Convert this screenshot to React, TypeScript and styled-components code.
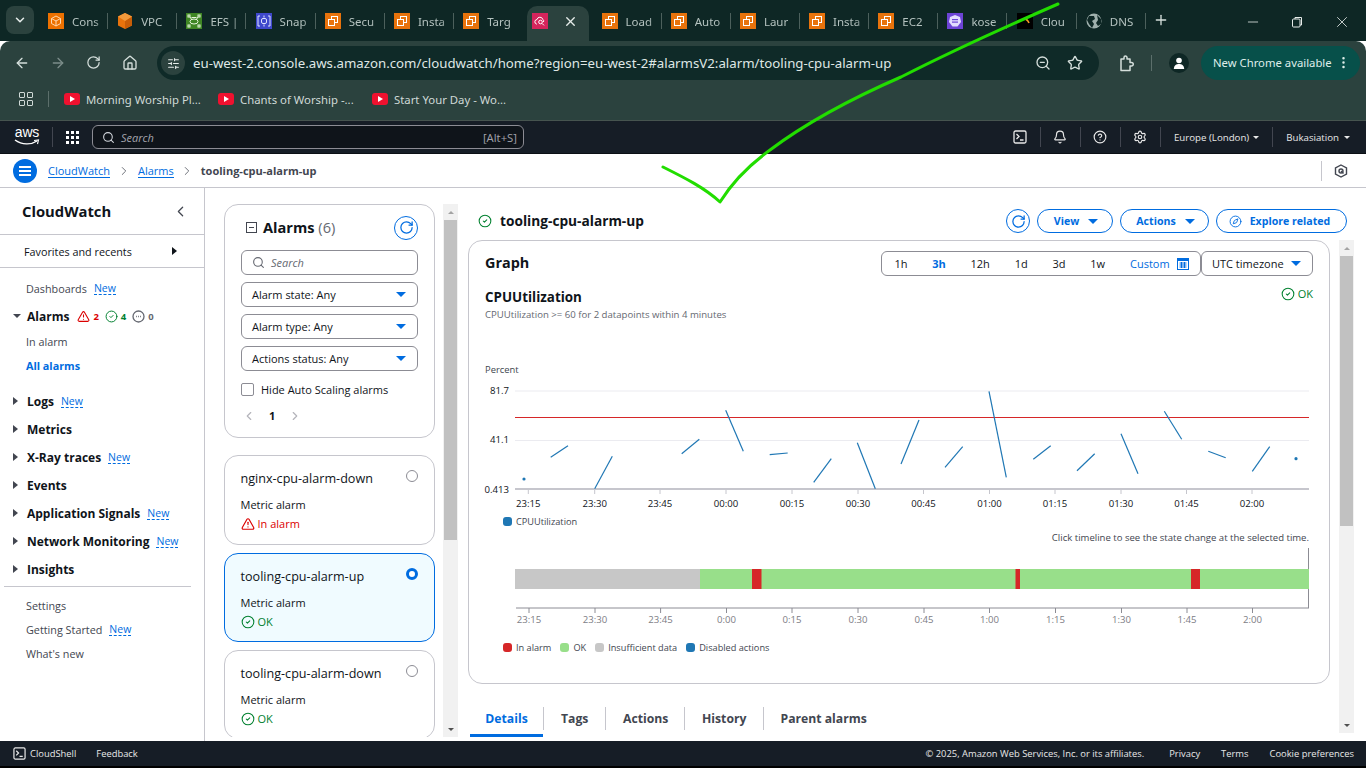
import styled, { createGlobalStyle } from 'styled-components';
import {
  ArrowLeft,
  ArrowRight,
  Bell,
  ChevronDown,
  ChevronLeft,
  ChevronRight,
  CircleCheck,
  CircleHelp,
  Compass,
  Home,
  Minus,
  MoreVertical,
  Plus,
  RotateCw,
  Search,
  Settings,
  SlidersHorizontal,
  Star,
  TriangleAlert,
  X,
  ZoomOut,
} from 'lucide-react';

const GlobalStyle = createGlobalStyle`
  html, body {
    margin: 0;
    padding: 0;
    background: #fff;
  }
  * {
    box-sizing: border-box;
  }
  body {
    font-family: "Open Sans", "Liberation Sans", sans-serif;
    color: #0f141a;
  }
`;

const blue = '#006ce0';
const green = '#00802f';
const red = '#db0000';

const Page = styled.div`
  position: relative;
  width: 1366px;
  height: 768px;
  overflow: hidden;
  display: flex;
  flex-direction: column;
`;

/* browser chrome */
const TabStrip = styled.div`
  height: 41px;
  flex: none;
  background: #0e2725;
  display: flex;
  align-items: flex-start;
  padding: 6px 0 0 6px;
  font-family: "Noto Sans", sans-serif;
`;

const TabMenu = styled.div`
  width: 28px;
  height: 28px;
  margin-right: 7px;
  border-radius: 8px;
  background: #2b423e;
  color: #e6ecea;
  display: flex;
  align-items: center;
  justify-content: center;
`;

const Tab = styled.div<{ $active?: boolean }>`
  width: ${(p) => (p.$active ? '62px' : '69.2px')};
  height: 35px;
  margin: ${(p) => (p.$active ? '0 5.6px 0 1.6px' : '0')};
  padding: 0 0 5px ${(p) => (p.$active ? '5.4px' : '7px')};
  display: flex;
  align-items: center;
  flex: none;
  background: ${(p) => (p.$active ? '#2b423e' : 'transparent')};
  border-radius: 10px 10px 0 0;
`;

const TabTitle = styled.span`
  width: 31px;
  margin: 0 4px 0 8px;
  overflow: hidden;
  white-space: nowrap;
  font-size: 11.5px;
  color: #b4c2bf;
  -webkit-mask-image: linear-gradient(to right, #000 72%, rgba(0, 0, 0, 0.35));
`;

const TabSep = styled.span`
  width: 1px;
  height: 16px;
  background: #4c605c;
`;

const TabClose = styled(X)`
  margin-left: 15px;
  color: #e6ecea;
`;

const FavBox = styled.span<{ $bg: string }>`
  width: 16px;
  height: 16px;
  flex: none;
  background: ${(p) => p.$bg};
  display: flex;
  align-items: center;
  justify-content: center;
`;

const NewTab = styled(Plus)`
  margin: 6px 0 0 5px;
  color: #d5dfdc;
`;

const WindowControls = styled.div`
  margin-left: auto;
  display: flex;
  align-items: center;
  gap: 30px;
  padding: 7px 15px 0 0;
  color: #e6ecea;
`;

const Toolbar = styled.div`
  height: 43px;
  flex: none;
  background: #2b423e;
  border-radius: 10px 10px 0 0;
  display: flex;
  align-items: center;
  padding: 1px 6px 0 14px;
  color: #d5dfdc;
  font-family: "Noto Sans", sans-serif;
`;

const ToolButton = styled.span<{ $dim?: boolean; $gap?: number; $left?: number }>`
  width: 16px;
  height: 16px;
  margin: 0 ${(p) => p.$gap ?? 20}px 0 ${(p) => p.$left ?? 0}px;
  display: flex;
  color: ${(p) => (p.$dim ? '#7c8d8a' : '#d5dfdc')};
`;

const UrlBar = styled.div`
  width: 942px;
  height: 34px;
  margin: 0 0 0 -1px;
  border-radius: 17px;
  background: #0f2a28;
  display: flex;
  align-items: center;
  padding: 0 16px 0 4px;
`;

const SiteInfo = styled.span`
  width: 24px;
  height: 24px;
  border-radius: 50%;
  background: #2b423e;
  display: flex;
  align-items: center;
  justify-content: center;
  color: #e6ecea;
`;

const UrlText = styled.span`
  margin-left: 8px;
  font-size: 13.25px;
  color: #dfe7e5;
  white-space: nowrap;
`;

const UrlIcons = styled.span`
  margin-left: auto;
  display: flex;
  gap: 16px;
  color: #d5dfdc;
`;

const ToolSep = styled.span`
  width: 1px;
  height: 16px;
  margin: 0 17px 0 17px;
  background: #5c6f6b;
`;

const ProfileDot = styled.span`
  width: 20px;
  height: 20px;
  margin-right: 12px;
  border-radius: 50%;
  background: #0e2725;
  color: #fff;
  display: flex;
  align-items: center;
  justify-content: center;
`;

const UpdatePill = styled.span`
  width: 159px;
  height: 34px;
  border-radius: 17px;
  background: #07504a;
  color: #dfeeea;
  font-size: 11.3px;
  display: flex;
  align-items: center;
  justify-content: space-between;
  padding: 0 9px 1px 12px;
  white-space: nowrap;
`;

const Bookmarks = styled.div`
  height: 37px;
  flex: none;
  background: #2b423e;
  border-bottom: 1px solid #46544f;
  display: flex;
  align-items: center;
  padding: 0 0 6px 19px;
  font-family: "Noto Sans", sans-serif;
  font-size: 11.35px;
  color: #cfd9d6;
`;

const AppsGrid = styled.span`
  width: 14px;
  height: 14px;
  display: grid;
  grid-template-columns: 6px 6px;
  gap: 2px;
  margin-right: 15px;
`;

const AppsCell = styled.span`
  border: 1.4px solid #cfd9d6;
  border-radius: 1px;
`;

const BookmarkSep = styled.span`
  width: 1px;
  height: 16px;
  margin-right: 15px;
  background: #5c6f6b;
`;

const Bookmark = styled.span<{ $w: number }>`
  width: ${(p) => p.$w}px;
  display: flex;
  align-items: center;
  gap: 6px;
  white-space: nowrap;
`;

const YouTubeMark = styled.span`
  width: 16px;
  height: 12px;
  border-radius: 3px;
  background: #f0112f;
  display: flex;
  align-items: center;
  justify-content: center;
  flex: none;
`;

/* console header */
const ConsoleNav = styled.div`
  height: 33px;
  flex: none;
  background: #161d26;
  display: flex;
  align-items: center;
  padding: 0 0 0 14px;
  color: #e8e8e8;
  border-bottom: 1px solid #0b0f14;
`;

const AwsLogo = styled.span`
  width: 26px;
  height: 24px;
  position: relative;
  display: block;
  color: #fff;
  font-family: "Liberation Sans", sans-serif;
  font-size: 14px;
  line-height: 15px;
  letter-spacing: -0.2px;
  text-align: center;
`;

const AwsSmile = styled.svg`
  position: absolute;
  left: 0;
  top: 14px;
`;

const NavSep = styled.span<{ $l: number; $r: number; $h?: number }>`
  width: 1px;
  height: ${(p) => p.$h ?? 20}px;
  margin: 0 ${(p) => p.$r}px 0 ${(p) => p.$l}px;
  background: #424650;
  flex: none;
`;

const Waffle = styled.span`
  width: 13px;
  height: 13px;
  display: grid;
  grid-template-columns: repeat(3, 3px);
  grid-auto-rows: 3px;
  gap: 2px;
`;

const WaffleDot = styled.span`
  background: #fff;
`;

const ConsoleSearch = styled.div`
  width: 432px;
  height: 24px;
  margin-left: 13px;
  border: 1px solid #8c8c94;
  border-radius: 6px;
  background: #0f141a;
  display: flex;
  align-items: center;
  padding: 0 6px 0 9px;
  gap: 6px;
  font-size: 11px;
  color: #a4a4ad;
`;

const SearchHint = styled.span`
  font-style: italic;
`;

const SearchKeys = styled.span`
  margin-left: auto;
  font-size: 11.3px;
`;

const NavRight = styled.div`
  margin-left: auto;
  display: flex;
  align-items: center;
  padding-right: 16px;
  font-size: 9.7px;
  color: #e8e8e8;
`;

const NavIconSlot = styled.span`
  width: 39px;
  display: flex;
  justify-content: center;
`;

const NavMenu = styled.span<{ $gap: number }>`
  display: flex;
  align-items: center;
  gap: ${(p) => p.$gap}px;
  white-space: nowrap;
`;

const Caret = styled.span<{ $dir?: 'down' | 'right' | 'up'; $size?: number; $color?: string }>`
  display: inline-block;
  flex: none;
  width: 0;
  height: 0;
  ${(p) => {
    const s = p.$size ?? 4;
    const c = p.$color ?? 'currentColor';
    if (p.$dir === 'right') {
      return `border-top: ${s}px solid transparent; border-bottom: ${s}px solid transparent; border-left: ${s * 1.25}px solid ${c};`;
    }
    if (p.$dir === 'up') {
      return `border-left: ${s * 1.2}px solid transparent; border-right: ${s * 1.2}px solid transparent; border-bottom: ${s * 1.2}px solid ${c};`;
    }
    return `border-left: ${s * 1.2}px solid transparent; border-right: ${s * 1.2}px solid transparent; border-top: ${s * 1.2}px solid ${c};`;
  }}
`;

const BreadcrumbBar = styled.div`
  height: 34px;
  flex: none;
  background: #fff;
  border-bottom: 1px solid #c6c6cd;
  display: flex;
  align-items: center;
  padding: 0 18px 0 13px;
  font-size: 11px;
`;

const MenuCircle = styled.span`
  width: 24px;
  height: 24px;
  margin-right: 11px;
  border-radius: 50%;
  background: ${blue};
  display: flex;
  flex-direction: column;
  align-items: center;
  justify-content: center;
  gap: 2px;
`;

const MenuLine = styled.span`
  width: 12px;
  height: 2px;
  background: #fff;
`;

const CrumbLink = styled.span`
  color: ${blue};
  border-bottom: 1px solid ${blue};
  line-height: 13px;
`;

const CrumbChevron = styled(ChevronRight)<{ $m: number }>`
  margin: 0 ${(p) => p.$m}px;
  color: #656871;
`;

const CrumbCurrent = styled.span`
  color: #424650;
  font-weight: 700;
  font-size: 11px;
`;

const CrumbEnd = styled.span`
  margin-left: auto;
  display: flex;
  align-items: center;
  gap: 12px;
  color: #424650;
`;

const CrumbEndSep = styled.span`
  width: 1px;
  height: 20px;
  background: #c6c6cd;
`;

/* body */
const Body = styled.div`
  flex: 1;
  min-height: 0;
  display: flex;
  background: #fff;
`;

const Sidebar = styled.nav`
  width: 205px;
  flex: none;
  border-right: 1px solid #c6c6cd;
  display: flex;
  flex-direction: column;
`;

const SideHead = styled.div`
  height: 47px;
  flex: none;
  border-bottom: 1px solid #c6c6cd;
  display: flex;
  align-items: center;
  justify-content: space-between;
  padding: 0 15px 0 22px;
  font-size: 14.8px;
  font-weight: 700;
`;

const SideFavs = styled.div`
  height: 33px;
  flex: none;
  border-bottom: 1px solid #c6c6cd;
  display: flex;
  align-items: center;
  justify-content: space-between;
  padding: 0 27px 0 24px;
  font-size: 10.8px;
  color: #0f141a;
`;

const SideItem = styled.div<{ $h: number; $top?: number }>`
  height: ${(p) => p.$h}px;
  margin-top: ${(p) => p.$top ?? 0}px;
  flex: none;
  display: flex;
  align-items: center;
  padding-left: 26px;
  font-size: 10.8px;
  color: #424650;
`;

const SideGroup = styled.div<{ $h?: number; $top?: number }>`
  height: ${(p) => p.$h ?? 28}px;
  margin-top: ${(p) => p.$top ?? 0}px;
  flex: none;
  display: flex;
  align-items: center;
  padding-left: 13px;
  font-size: 12px;
  font-weight: 700;
  color: #0f141a;
`;

const GroupCaret = styled.span`
  width: 14px;
  color: #424650;
  display: flex;
`;

const NewTag = styled.span`
  margin-left: 7px;
  font-size: 10.5px;
  font-weight: 400;
  color: ${blue};
  border-bottom: 1px dashed ${blue};
  line-height: 12px;
`;

const ActiveItem = styled.span`
  color: ${blue};
  font-weight: 700;
`;

const AlarmCount = styled.span<{ $color: string; $gap?: number }>`
  display: flex;
  align-items: center;
  gap: 3px;
  margin-left: ${(p) => p.$gap ?? 6}px;
  font-size: 9.5px;
  color: ${(p) => p.$color};
`;

const SideDivider = styled.div`
  height: 1px;
  margin: 3px 13px 6px 4px;
  background: #c6c6cd;
  flex: none;
`;

const ListPane = styled.div`
  width: 238px;
  flex: none;
  margin-bottom: 4px;
  padding: 16px 8px 0 19px;
  overflow: hidden;
  display: flex;
  flex-direction: column;
`;

const FilterCard = styled.div`
  height: 234px;
  flex: none;
  margin-bottom: 17px;
  border: 1px solid #c6c6cd;
  border-radius: 14px;
  padding: 10px 16px 0;
`;

const FilterHead = styled.div`
  display: flex;
  align-items: center;
  height: 25px;
  margin-bottom: 10px;
  padding-left: 5px;
`;

const CollapseBox = styled.span`
  width: 11px;
  height: 11px;
  border: 1.4px solid #424650;
  margin-right: 6px;
  display: flex;
  align-items: center;
  justify-content: center;
`;

const CollapseBar = styled.span`
  width: 5px;
  height: 1.4px;
  background: #424650;
`;

const FilterTitle = styled.span`
  font-size: 14.6px;
  font-weight: 700;
  line-height: 20px;
  padding-bottom: 2px;
`;

const FilterCount = styled.span`
  font-weight: 400;
  color: #656871;
`;

const RefreshCircle = styled.span<{ $mlAuto?: boolean }>`
  width: 24px;
  height: 24px;
  margin-left: ${(p) => (p.$mlAuto ? 'auto' : '0')};
  border: 1px solid ${blue};
  border-radius: 50%;
  display: flex;
  align-items: center;
  justify-content: center;
  color: ${blue};
  flex: none;
`;

const FilterField = styled.div<{ $mb?: number }>`
  height: 25px;
  margin-bottom: ${(p) => p.$mb ?? 7}px;
  border: 1px solid #8c8c94;
  border-radius: 6px;
  display: flex;
  align-items: center;
  justify-content: space-between;
  padding: 0 11px 0 10px;
  font-size: 11px;
  color: #0f141a;
`;

const FilterSearch = styled.span`
  display: flex;
  align-items: center;
  gap: 6px;
  color: #656871;
  font-style: italic;
`;

const CheckRow = styled.label`
  display: flex;
  align-items: center;
  gap: 7px;
  margin-top: 11px;
  font-size: 11px;
  color: #0f141a;
`;

const CheckBox = styled.span`
  width: 13px;
  height: 13px;
  border: 1.4px solid #8c8c94;
  border-radius: 2px;
`;

const Pager = styled.div`
  display: flex;
  align-items: center;
  margin-top: 11px;
  padding-left: 1px;
  gap: 13px;
  font-size: 11px;
  font-weight: 700;
  color: #b4b4bb;
`;

const PagerNum = styled.span`
  color: #0f141a;
`;

const AlarmCard = styled.div<{ $selected?: boolean; $h?: number }>`
  height: ${(p) => p.$h ?? 89}px;
  flex: none;
  margin-bottom: 8px;
  border: 1px solid ${(p) => (p.$selected ? blue : '#c6c6cd')};
  border-radius: 14px;
  background: ${(p) => (p.$selected ? '#f0fbff' : '#fff')};
  padding: 14px 16px 0 15.5px;
  display: flex;
  flex-direction: column;
`;

const CardTop = styled.div`
  display: flex;
  justify-content: space-between;
  height: 18px;
  margin-bottom: 9px;
  font-size: 12.6px;
`;

const Radio = styled.span<{ $on?: boolean }>`
  width: 12px;
  height: 12px;
  border-radius: 50%;
  flex: none;
  ${(p) => (p.$on ? `background:#fff; border: 3.5px solid ${blue};` : 'border: 1.3px solid #8c8c94;')}
`;

const CardType = styled.div`
  font-size: 11px;
  color: #0f141a;
  line-height: 15px;
  margin-bottom: 4px;
`;

const StatusText = styled.span<{ $color: string; $size?: number }>`
  display: flex;
  align-items: center;
  gap: 3px;
  font-size: ${(p) => p.$size ?? 11}px;
  color: ${(p) => p.$color};
  line-height: 15px;
`;

const ScrollTrack = styled.div<{ $top: number }>`
  width: 15px;
  flex: none;
  margin: ${(p) => p.$top}px 0 4px;
  background: #f1f1f1;
  display: flex;
  flex-direction: column;
  align-items: center;
`;

const ScrollArrow = styled.span`
  height: 16px;
  flex: none;
  display: flex;
  align-items: center;
  color: #a3a3a3;
`;

const ScrollThumb = styled.span<{ $h: number }>`
  width: 13px;
  height: ${(p) => p.$h}px;
  flex: none;
  background: #c1c1c1;
`;

const ScrollFill = styled.span`
  flex: 1;
`;

const DetailPane = styled.div`
  flex: 1;
  min-width: 0;
  display: flex;
  flex-direction: column;
  padding: 21px 0 4px 10px;
`;

const DetailHead = styled.div`
  height: 24px;
  flex: none;
  display: flex;
  align-items: center;
  padding: 0 19px 0 10px;
`;

const DetailTitle = styled.span`
  margin-left: 8px;
  padding-bottom: 2px;
  font-size: 13.7px;
  font-weight: 700;
`;

const HeadActions = styled.div`
  margin-left: auto;
  display: flex;
  align-items: center;
  gap: 7px;
`;

const PillButton = styled.span<{ $w: number; $pl?: number; $pr?: number; $gap?: number }>`
  width: ${(p) => p.$w}px;
  height: 24px;
  border: 1px solid ${blue};
  border-radius: 12px;
  display: flex;
  align-items: center;
  justify-content: center;
  gap: ${(p) => p.$gap ?? 9}px;
  padding: 0 ${(p) => p.$pr ?? 0}px 0 ${(p) => p.$pl ?? 0}px;
  font-size: 10.6px;
  font-weight: 700;
  color: ${blue};
`;

const DetailRow = styled.div`
  flex: 1;
  min-height: 0;
  margin-top: 7px;
  display: flex;
  gap: 9px;
  padding-right: 12px;
`;

const DetailContent = styled.div`
  width: 862px;
  flex: none;
`;

const GraphPanel = styled.section`
  height: 444px;
  border: 1px solid #c6c6cd;
  border-radius: 14px;
  padding: 10px 16px 0 16px;
`;

const GraphHead = styled.div`
  height: 25px;
  display: flex;
  align-items: center;
  justify-content: space-between;
`;

const GraphTitle = styled.h2`
  margin: 0;
  padding: 0 0 3px;
  font-size: 14.4px;
  font-weight: 700;
`;

const RangeGroup = styled.div`
  display: flex;
`;

const RangeBox = styled.div`
  width: 320px;
  height: 25px;
  border: 1px solid #8c8c94;
  border-radius: 6px;
  display: flex;
  align-items: center;
`;

const RangeItem = styled.span<{ $on?: boolean }>`
  padding: 0 12.4px;
  font-size: 11px;
  font-weight: ${(p) => (p.$on ? 700 : 400)};
  color: ${(p) => (p.$on ? blue : '#0f141a')};
`;

const RangeCustom = styled.span`
  display: flex;
  align-items: center;
  gap: 7px;
  padding-left: 12.5px;
  font-size: 11px;
  color: ${blue};
`;

const TimezoneBox = styled.div`
  width: 112px;
  height: 25px;
  border: 1px solid #8c8c94;
  border-radius: 6px;
  display: flex;
  align-items: center;
  justify-content: space-between;
  padding: 0 11px 0 10px;
  font-size: 11px;
  white-space: nowrap;
`;

const MetricRow = styled.div`
  margin-top: 12px;
  display: flex;
  align-items: flex-start;
  justify-content: space-between;
`;

const MetricTitle = styled.h3`
  margin: 0;
  font-size: 13.4px;
  line-height: 18px;
  font-weight: 700;
`;

const MetricSub = styled.p`
  margin: 1px 0 0;
  font-size: 9.6px;
  line-height: 15px;
  color: #656871;
`;

const MetricState = styled.span`
  margin-top: -2px;
`;

const Percent = styled.div`
  margin: 41px 0 0;
  font-size: 9.4px;
  line-height: 14px;
  color: #424650;
`;

const ChartSvg = styled.svg`
  display: block;
  margin: 3px 0 0 1px;
  overflow: visible;
  font-family: "Open Sans", sans-serif;
  font-size: 9.6px;
`;

const TimelineSvg = styled.svg`
  display: block;
  margin: 3px 0 0 1px;
  overflow: visible;
  font-family: "Open Sans", sans-serif;
  font-size: 9.6px;
`;

const SeriesLegend = styled.div`
  margin: 1px 0 0 18px;
  display: flex;
  align-items: center;
  gap: 4px;
  font-size: 9.2px;
  color: #424650;
`;

const Swatch = styled.span<{ $c: string }>`
  width: 9px;
  height: 9px;
  border-radius: 3px;
  background: ${(p) => p.$c};
  flex: none;
`;

const TimelineHint = styled.div`
  margin-top: 3px;
  text-align: right;
  padding-right: 4px;
  font-size: 9.55px;
  line-height: 13px;
  color: #424650;
`;

const StateLegend = styled.div`
  margin: 16px 0 0 18px;
  display: flex;
  align-items: center;
  font-size: 9.2px;
  color: #424650;
`;

const StateItem = styled.span`
  display: flex;
  align-items: center;
  gap: 4px;
  margin-right: 9px;
`;

const TabsRow = styled.div`
  margin-top: 19px;
  height: 34px;
  display: flex;
  align-items: flex-start;
  padding-left: 2px;
`;

const DetailTab = styled.span<{ $on?: boolean; $w: number; $last?: boolean }>`
  width: ${(p) => p.$w}px;
  height: ${(p) => (p.$on ? '30px' : '23px')};
  margin-top: 4px;
  display: flex;
  align-items: ${(p) => (p.$on ? 'flex-start' : 'center')};
  justify-content: ${(p) => (p.$on ? 'center' : 'flex-start')};
  padding: ${(p) => (p.$on ? '3px 0 0' : '0 0 0 17px')};
  font-size: 12.2px;
  font-weight: 700;
  color: ${(p) => (p.$on ? blue : '#424650')};
  border-right: ${(p) => (p.$on || p.$last ? 'none' : '1px solid #c6c6cd')};
  border-bottom: ${(p) => (p.$on ? `3px solid ${blue}` : 'none')};
  white-space: nowrap;
`;

const TabDivider = styled.span`
  width: 1px;
  height: 23px;
  margin-top: 4px;
  background: #c6c6cd;
`;

const Footer = styled.footer`
  height: 27px;
  flex: none;
  background: #161d26;
  border-bottom: 2px solid #000;
  display: flex;
  align-items: center;
  padding: 0 12px 0 13px;
  font-size: 9.4px;
  color: #e8e8e8;
`;

const FooterShell = styled.span`
  display: flex;
  align-items: center;
  gap: 4px;
  margin-right: 20px;
`;

const FooterRight = styled.span`
  margin-left: auto;
  display: flex;
  align-items: center;
  gap: 21px;
`;

const FooterCopy = styled.span`
  margin-right: 4px;
`;

const CheckMark = styled.svg`
  position: absolute;
  inset: 0;
  pointer-events: none;
`;

const ShellIcon = ({ size = 14 }: { size?: number }) => (
  <svg width={size} height={size} viewBox="0 0 14 14" fill="none" stroke="#e8e8e8" strokeWidth="1.3">
    <rect x="1" y="1" width="12" height="12" rx="1.5" />
    <path d="M3.5 4 L6 6.5 L3.5 9 M7 10 H10.5" />
  </svg>
);

const CubeGlyph = () => (
  <svg width="12" height="12" viewBox="0 0 12 12" fill="none" stroke="#ffd9b0" strokeWidth="1">
    <path d="M6 1 L10.5 3.5 V8.5 L6 11 L1.5 8.5 V3.5 Z M1.5 3.5 L6 6 L10.5 3.5 M6 6 V11" />
  </svg>
);

const StackGlyph = () => (
  <svg width="12" height="12" viewBox="0 0 12 12" fill="none" stroke="#fff" strokeWidth="1">
    <rect x="4.5" y="1.5" width="6" height="6" />
    <rect x="1.5" y="4.5" width="6" height="6" fill="#e8730c" />
  </svg>
);

const NodeGlyph = () => (
  <svg width="14" height="14" viewBox="0 0 14 14" fill="none" stroke="#e6f4dc" strokeWidth="1">
    <ellipse cx="7" cy="7.5" rx="4" ry="2.5" />
    <path d="M4.5 3.5 H9.5 M5 6 L3 3 M9 6 L11 3" />
    <rect x="1" y="1" width="2" height="2" />
    <rect x="11" y="1" width="2" height="2" />
    <rect x="1" y="11" width="2" height="2" />
    <rect x="11" y="11" width="2" height="2" />
  </svg>
);

const BracketGlyph = () => (
  <svg width="14" height="14" viewBox="0 0 14 14" fill="none" stroke="#dfe3ff" strokeWidth="1">
    <path d="M3 2 H1 V12 H3 M11 2 H13 V12 H11" />
    <rect x="4.5" y="4.5" width="5" height="5" rx="1.5" />
    <path d="M7 1.5 V3.5 M7 10.5 V12.5" />
  </svg>
);

const WatchGlyph = () => (
  <svg width="12" height="12" viewBox="0 0 12 12" fill="none" stroke="#fff" strokeWidth="1">
    <path d="M3 9 H2.5 A2.3 2.3 0 0 1 3 4.5 A3 3 0 0 1 8.8 4.4 A2.2 2.2 0 0 1 9.5 7" />
    <circle cx="6.5" cy="7" r="1.8" />
    <path d="M8 8.4 L10 10.4" />
  </svg>
);

const ShieldGlyph = () => (
  <svg width="14" height="14" viewBox="0 0 14 14" fill="#e4dcff">
    <path d="M7 1 L12 3 L13 8 L9.5 12.5 H4.5 L1 8 L2 3 Z" />
    <rect x="4" y="5" width="6" height="1.2" fill="#6d44d6" />
    <rect x="4" y="7.5" width="6" height="1.2" fill="#6d44d6" />
  </svg>
);

const ExtensionIcon = () => (
  <svg width="16" height="18" viewBox="0 0 16 18" fill="none" stroke="#d5dfdc" strokeWidth="1.5" strokeLinejoin="round">
    <path d="M3 4 H6 V2.5 A1.3 1.3 0 0 1 9 2.5 V4 H12 V7.5 H13.5 A1.5 1.5 0 0 1 13.5 11 H12 V15.5 H3 Z" />
  </svg>
);

const CalendarIcon = () => (
  <svg width="12" height="12" viewBox="0 0 12 12">
    <rect x="0.5" y="0.5" width="11" height="11" fill="#fff" stroke={blue} />
    <rect x="0.5" y="0.5" width="11" height="2.5" fill={blue} />
    <path d="M2.5 5 H9.5 M2.5 7 H9.5 M2.5 9 H9.5 M4.5 4 V10 M7.5 4 V10" stroke={blue} strokeWidth="1" />
  </svg>
);

type TabKind = 'console' | 'vpc' | 'efs' | 'snap' | 'ec2' | 'watch' | 'kose' | 'cloud' | 'dns';

const Favicon = ({ kind }: { kind: TabKind }) => {
  switch (kind) {
    case 'console':
      return <FavBox $bg="#ed7100"><CubeGlyph /></FavBox>;
    case 'vpc':
      return (
        <svg width="16" height="18" viewBox="0 0 16 18">
          <path d="M8 1 L15 4.5 V13.5 L8 17 L1 13.5 V4.5 Z" fill="#e8730c" />
          <path d="M8 9 L15 4.5 V13.5 L8 17 Z" fill="#c85e08" />
          <path d="M8 1 L15 4.5 L8 9 L1 4.5 Z" fill="#f39a3c" />
        </svg>
      );
    case 'efs':
      return <FavBox $bg="#3f8624"><NodeGlyph /></FavBox>;
    case 'snap':
      return <FavBox $bg="#3f48cc"><BracketGlyph /></FavBox>;
    case 'ec2':
      return <FavBox $bg="#e8730c"><StackGlyph /></FavBox>;
    case 'watch':
      return <FavBox $bg="#d6245c"><WatchGlyph /></FavBox>;
    case 'kose':
      return <FavBox $bg="#6d44d6"><ShieldGlyph /></FavBox>;
    case 'cloud':
      return (
        <FavBox $bg="#000">
          <svg width="12" height="12" viewBox="0 0 12 12" fill="none" stroke="#f59a23" strokeWidth="1.6">
            <path d="M4 4 Q8 3 10 8" />
          </svg>
        </FavBox>
      );
    default:
      return (
        <svg width="16" height="16" viewBox="0 0 16 16">
          <circle cx="8" cy="8" r="7.5" fill="#9fb0ad" />
          <path d="M3 3 L8 3 L9 6 L6 8 L8 11 L6 15 L3 11 L1 7 Z M11 2 L15 6 L15 11 L12 13 L10 10 L12 7 Z" fill="#0e2725" />
        </svg>
      );
  }
};

// titles as far as the narrow tabs show them
const tabs: { title: string; kind: TabKind }[] = [
  { title: 'Cons', kind: 'console' },
  { title: 'VPC', kind: 'vpc' },
  { title: 'EFS |', kind: 'efs' },
  { title: 'Snap', kind: 'snap' },
  { title: 'Secu', kind: 'ec2' },
  { title: 'Insta', kind: 'ec2' },
  { title: 'Targ', kind: 'ec2' },
  { title: '', kind: 'watch' },
  { title: 'Load', kind: 'ec2' },
  { title: 'Auto', kind: 'ec2' },
  { title: 'Laur', kind: 'ec2' },
  { title: 'Insta', kind: 'ec2' },
  { title: 'EC2', kind: 'ec2' },
  { title: 'kose', kind: 'kose' },
  { title: 'Clou', kind: 'cloud' },
  { title: 'DNS', kind: 'dns' },
];

const bookmarks = [
  { label: 'Morning Worship Pl...', w: 154 },
  { label: 'Chants of Worship -...', w: 154 },
  { label: 'Start Your Day - Wo...', w: 140 },
];

const YouTube = () => (
  <YouTubeMark>
    <svg width="6" height="6" viewBox="0 0 6 6">
      <path d="M1 0 L6 3 L1 6 Z" fill="#fff" />
    </svg>
  </YouTubeMark>
);

const segments = [
  [550.7, 457.3, 568, 445.7],
  [594.7, 488.7, 612.3, 456.3],
  [681.7, 453.7, 699.3, 439.3],
  [725.7, 410.3, 743.3, 451.3],
  [769.7, 454.7, 787.7, 453],
  [813.7, 482.3, 831.3, 458.7],
  [857.3, 442.7, 875.3, 488.7],
  [901, 464, 919, 420],
  [945, 467.3, 962.7, 446.7],
  [989, 391.3, 1006.3, 477.3],
  [1033.3, 459.3, 1050.7, 445.7],
  [1077, 470.7, 1094.7, 453.7],
  [1121, 433.7, 1138, 473.7],
  [1164.3, 411.3, 1181.7, 439.3],
  [1208.3, 451.3, 1225.7, 457.7],
  [1252.3, 471.3, 1269.7, 446.7],
];

const chartTicks = [
  [528.3, '23:15'],
  [594.7, '23:30'],
  [660, '23:45'],
  [726, '00:00'],
  [792, '00:15'],
  [858, '00:30'],
  [923.5, '00:45'],
  [989.5, '01:00'],
  [1055, '01:15'],
  [1121, '01:30'],
  [1186.5, '01:45'],
  [1252, '02:00'],
] as const;

const timelineTicks = [
  [529, '23:15'],
  [595, '23:30'],
  [660.6, '23:45'],
  [726.5, '0:00'],
  [792, '0:15'],
  [858, '0:30'],
  [924, '0:45'],
  [989.5, '1:00'],
  [1055.5, '1:15'],
  [1121.5, '1:30'],
  [1187, '1:45'],
  [1252.5, '2:00'],
] as const;

const CpuChart = () => (
  <ChartSvg width="827" height="134" viewBox="486 380 827 134">
    <line x1="515" x2="1309" y1="391" y2="391" stroke="#ebebf0" />
    <line x1="515" x2="1309" y1="440.5" y2="440.5" stroke="#ebebf0" />
    <line x1="515" x2="1309" y1="417.5" y2="417.5" stroke="#d62728" />
    <line x1="515" x2="1309" y1="489" y2="489" stroke="#c6c6cd" strokeWidth="2" />
    <g textAnchor="end" fill="#0f141a">
      <text x="509" y="393.5">81.7</text>
      <text x="509" y="443">41.1</text>
      <text x="509" y="492.5">0.413</text>
    </g>
    {chartTicks.map(([x, label]) => (
      <g key={label}>
        <line x1={x} x2={x} y1="490" y2="494" stroke="#c6c6cd" />
        <text x={x} y="507" textAnchor="middle" fill="#0f141a">{label}</text>
      </g>
    ))}
    {segments.map(([x1, y1, x2, y2]) => (
      <line key={x1} x1={x1} y1={y1} x2={x2} y2={y2} stroke="#1f77b4" strokeWidth="1.2" />
    ))}
    <circle cx="524" cy="479" r="1.6" fill="#1f77b4" />
    <circle cx="1296" cy="458.7" r="1.6" fill="#1f77b4" />
  </ChartSvg>
);

const Timeline = () => (
  <TimelineSvg width="827" height="78" viewBox="486 547 827 78">
    <line x1="1308.5" x2="1308.5" y1="548" y2="608" stroke="#8c8c94" />
    <rect x="515" y="569" width="794" height="20" fill="#98df8a" />
    <rect x="515" y="569" width="185" height="20" fill="#c7c7c7" />
    <rect x="752" y="569" width="9.5" height="20" fill="#d62728" />
    <rect x="1015.5" y="569" width="4.5" height="20" fill="#d62728" />
    <rect x="1191" y="569" width="9" height="20" fill="#d62728" />
    <line x1="516" x2="1309" y1="608" y2="608" stroke="#8c8c94" />
    {timelineTicks.map(([x, label]) => (
      <g key={label}>
        <line x1={x} x2={x} y1="608" y2="613" stroke="#8c8c94" />
        <text x={x} y="622.5" textAnchor="middle" fill="#7d7d85">{label}</text>
      </g>
    ))}
  </TimelineSvg>
);

const OkStatus = () => (
  <StatusText $color={green}>
    <CircleCheck size={14} strokeWidth={1.8} />
    OK
  </StatusText>
);

const App = () => (
  <Page>
    <GlobalStyle />
    <TabStrip>
      <TabMenu>
        <ChevronDown size={14} strokeWidth={2.6} />
      </TabMenu>
      {tabs.map((tab, index) =>
        index === 7 ? (
          <Tab key={index} $active>
            <Favicon kind={tab.kind} />
            <TabClose size={15} strokeWidth={2.2} />
          </Tab>
        ) : (
          <Tab key={index}>
            <Favicon kind={tab.kind} />
            <TabTitle>{tab.title}</TabTitle>
            {index !== 6 && <TabSep />}
          </Tab>
        ),
      )}
      <NewTab size={16} strokeWidth={2} />
      <WindowControls>
        <Minus size={16} strokeWidth={1.2} />
        <svg width="12" height="12" viewBox="0 0 12 12" fill="none" stroke="currentColor" strokeWidth="1">
          <rect x="1.5" y="3" width="7.5" height="8" rx="1" />
          <path d="M4 3 V1.5 H10.5 V9 H9" />
        </svg>
        <X size={18} strokeWidth={1.1} />
      </WindowControls>
    </TabStrip>

    <Toolbar>
      <ToolButton><ArrowLeft size={16} /></ToolButton>
      <ToolButton $dim><ArrowRight size={16} /></ToolButton>
      <ToolButton><RotateCw size={15} /></ToolButton>
      <ToolButton><Home size={16} /></ToolButton>
      <UrlBar>
        <SiteInfo><SlidersHorizontal size={13} /></SiteInfo>
        <UrlText>eu-west-2.console.aws.amazon.com/cloudwatch/home?region=eu-west-2#alarmsV2:alarm/tooling-cpu-alarm-up</UrlText>
        <UrlIcons>
          <ZoomOut size={16} />
          <Star size={16} />
        </UrlIcons>
      </UrlBar>
      <ToolButton $gap={0} $left={19}><ExtensionIcon /></ToolButton>
      <ToolSep />
      <ProfileDot>
        <svg width="12" height="12" viewBox="0 0 12 12" fill="#fff">
          <circle cx="6" cy="3.5" r="2.8" />
          <path d="M0.8 12 C1 8 3.5 7 6 7 C8.5 7 11 8 11.2 12 Z" />
        </svg>
      </ProfileDot>
      <UpdatePill>
        New Chrome available
        <MoreVertical size={15} />
      </UpdatePill>
    </Toolbar>

    <Bookmarks>
      <AppsGrid>
        <AppsCell />
        <AppsCell />
        <AppsCell />
        <AppsCell />
      </AppsGrid>
      <BookmarkSep />
      {bookmarks.map((bookmark) => (
        <Bookmark key={bookmark.label} $w={bookmark.w}>
          <YouTube />
          {bookmark.label}
        </Bookmark>
      ))}
    </Bookmarks>

    <ConsoleNav>
      <AwsLogo>
        aws
        <AwsSmile width="26" height="8" viewBox="0 0 26 8" fill="none">
          <path d="M1 1 C8 6 17 6 23 2" stroke="#fff" strokeWidth="1.4" />
          <path d="M20 1.5 L24.5 1 L23.5 5" stroke="#fff" strokeWidth="1.1" />
        </AwsSmile>
      </AwsLogo>
      <NavSep $l={12} $r={13} />
      <Waffle>
        {Array.from({ length: 9 }, (_, i) => (
          <WaffleDot key={i} />
        ))}
      </Waffle>
      <ConsoleSearch>
        <Search size={13} color="#d1d5db" />
        <SearchHint>Search</SearchHint>
        <SearchKeys>[Alt+S]</SearchKeys>
      </ConsoleSearch>
      <NavRight>
        <NavIconSlot><ShellIcon /></NavIconSlot>
        <NavSep $l={0} $r={0} />
        <NavIconSlot><Bell size={14} /></NavIconSlot>
        <NavSep $l={0} $r={0} />
        <NavIconSlot><CircleHelp size={14} /></NavIconSlot>
        <NavSep $l={0} $r={0} />
        <NavIconSlot><Settings size={14} /></NavIconSlot>
        <NavSep $l={0} $r={13} />
        <NavMenu $gap={4}>
          Europe (London)
          <Caret $size={3} />
        </NavMenu>
        <NavSep $l={13} $r={13} />
        <NavMenu $gap={5}>
          Bukasiation
          <Caret $size={3} />
        </NavMenu>
      </NavRight>
    </ConsoleNav>

    <BreadcrumbBar>
      <MenuCircle>
        <MenuLine />
        <MenuLine />
        <MenuLine />
      </MenuCircle>
      <CrumbLink>CloudWatch</CrumbLink>
      <CrumbChevron size={14} strokeWidth={1.6} $m={7} />
      <CrumbLink>Alarms</CrumbLink>
      <CrumbChevron size={14} strokeWidth={1.6} $m={6.5} />
      <CrumbCurrent>tooling-cpu-alarm-up</CrumbCurrent>
      <CrumbEnd>
        <CrumbEndSep />
        <svg width="14" height="14" viewBox="0 0 14 14" fill="none" stroke="#424650" strokeWidth="1.4">
          <path d="M7 1 L12.5 4 V10 L7 13 L1.5 10 V4 Z" />
          <circle cx="7" cy="7" r="2" />
          <path d="M7 7 L9.5 9.5" />
        </svg>
      </CrumbEnd>
    </BreadcrumbBar>

    <Body>
      <Sidebar>
        <SideHead>
          CloudWatch
          <ChevronLeft size={17} strokeWidth={1.8} color="#424650" />
        </SideHead>
        <SideFavs>
          Favorites and recents
          <Caret $dir="right" $size={4} $color="#0f141a" />
        </SideFavs>
        <SideItem $h={20} $top={10}>
          Dashboards
          <NewTag>New</NewTag>
        </SideItem>
        <SideGroup $h={28} $top={4}>
          <GroupCaret><Caret $size={4} /></GroupCaret>
          Alarms
          <AlarmCount $color={red} $gap={8}>
            <TriangleAlert size={13} strokeWidth={2} />
            2
          </AlarmCount>
          <AlarmCount $color={green}>
            <CircleCheck size={13} strokeWidth={1.8} />
            4
          </AlarmCount>
          <AlarmCount $color="#656871">
            <svg width="13" height="13" viewBox="0 0 13 13" fill="none" stroke="#656871" strokeWidth="1.3">
              <circle cx="6.5" cy="6.5" r="5.5" />
              <path d="M4 6.5h.8M6.1 6.5h.8M8.2 6.5h.8" />
            </svg>
            0
          </AlarmCount>
        </SideGroup>
        <SideItem $h={24} $top={-1}>In alarm</SideItem>
        <SideItem $h={24}><ActiveItem>All alarms</ActiveItem></SideItem>
        <SideGroup $top={10}>
          <GroupCaret><Caret $dir="right" /></GroupCaret>
          Logs
          <NewTag>New</NewTag>
        </SideGroup>
        <SideGroup>
          <GroupCaret><Caret $dir="right" /></GroupCaret>
          Metrics
        </SideGroup>
        <SideGroup>
          <GroupCaret><Caret $dir="right" /></GroupCaret>
          X-Ray traces
          <NewTag>New</NewTag>
        </SideGroup>
        <SideGroup>
          <GroupCaret><Caret $dir="right" /></GroupCaret>
          Events
        </SideGroup>
        <SideGroup>
          <GroupCaret><Caret $dir="right" /></GroupCaret>
          Application Signals
          <NewTag>New</NewTag>
        </SideGroup>
        <SideGroup>
          <GroupCaret><Caret $dir="right" /></GroupCaret>
          Network Monitoring
          <NewTag>New</NewTag>
        </SideGroup>
        <SideGroup>
          <GroupCaret><Caret $dir="right" /></GroupCaret>
          Insights
        </SideGroup>
        <SideDivider />
        <SideItem $h={24}>Settings</SideItem>
        <SideItem $h={24}>
          Getting Started
          <NewTag>New</NewTag>
        </SideItem>
        <SideItem $h={24}>What's new</SideItem>
      </Sidebar>

      <ListPane>
        <FilterCard>
          <FilterHead>
            <CollapseBox><CollapseBar /></CollapseBox>
            <FilterTitle>
              Alarms <FilterCount>(6)</FilterCount>
            </FilterTitle>
            <RefreshCircle $mlAuto>
              <RotateCw size={15} strokeWidth={2} />
            </RefreshCircle>
          </FilterHead>
          <FilterField>
            <FilterSearch>
              <Search size={13} />
              Search
            </FilterSearch>
          </FilterField>
          <FilterField>
            Alarm state: Any
            <Caret $size={4.5} $color={blue} />
          </FilterField>
          <FilterField>
            Alarm type: Any
            <Caret $size={4.5} $color={blue} />
          </FilterField>
          <FilterField $mb={0}>
            Actions status: Any
            <Caret $size={4.5} $color={blue} />
          </FilterField>
          <CheckRow>
            <CheckBox />
            Hide Auto Scaling alarms
          </CheckRow>
          <Pager>
            <ChevronLeft size={14} />
            <PagerNum>1</PagerNum>
            <ChevronRight size={14} />
          </Pager>
        </FilterCard>

        <AlarmCard $h={90}>
          <CardTop>
            nginx-cpu-alarm-down
            <Radio />
          </CardTop>
          <CardType>Metric alarm</CardType>
          <StatusText $color={red}>
            <TriangleAlert size={14} strokeWidth={2} />
            In alarm
          </StatusText>
        </AlarmCard>
        <AlarmCard $selected>
          <CardTop>
            tooling-cpu-alarm-up
            <Radio $on />
          </CardTop>
          <CardType>Metric alarm</CardType>
          <OkStatus />
        </AlarmCard>
        <AlarmCard>
          <CardTop>
            tooling-cpu-alarm-down
            <Radio />
          </CardTop>
          <CardType>Metric alarm</CardType>
          <OkStatus />
        </AlarmCard>
      </ListPane>

      <ScrollTrack $top={16}>
        <ScrollArrow><Caret $dir="up" $size={3} /></ScrollArrow>
        <ScrollThumb $h={320} />
        <ScrollFill />
        <ScrollArrow><Caret $size={3} $color="#505050" /></ScrollArrow>
      </ScrollTrack>

      <DetailPane>
        <DetailHead>
          <CircleCheck size={14} strokeWidth={1.8} color={green} />
          <DetailTitle>tooling-cpu-alarm-up</DetailTitle>
          <HeadActions>
            <RefreshCircle>
              <RotateCw size={15} strokeWidth={2} />
            </RefreshCircle>
            <PillButton $w={76} $pl={2}>
              View
              <Caret $size={4.5} $color={blue} />
            </PillButton>
            <PillButton $w={89} $pl={2}>
              Actions
              <Caret $size={4.5} $color={blue} />
            </PillButton>
            <PillButton $w={131} $pr={4} $gap={8}>
              <Compass size={13} strokeWidth={1.7} />
              Explore related
            </PillButton>
          </HeadActions>
        </DetailHead>

        <DetailRow>
          <DetailContent>
            <GraphPanel>
              <GraphHead>
                <GraphTitle>Graph</GraphTitle>
                <RangeGroup>
                  <RangeBox>
                    <RangeItem>1h</RangeItem>
                    <RangeItem $on>3h</RangeItem>
                    <RangeItem>12h</RangeItem>
                    <RangeItem>1d</RangeItem>
                    <RangeItem>3d</RangeItem>
                    <RangeItem>1w</RangeItem>
                    <RangeCustom>
                      Custom
                      <CalendarIcon />
                    </RangeCustom>
                  </RangeBox>
                  <TimezoneBox>
                    UTC timezone
                    <Caret $size={4.5} $color={blue} />
                  </TimezoneBox>
                </RangeGroup>
              </GraphHead>
              <MetricRow>
                <div>
                  <MetricTitle>CPUUtilization</MetricTitle>
                  <MetricSub>CPUUtilization &gt;= 60 for 2 datapoints within 4 minutes</MetricSub>
                </div>
                <MetricState><OkStatus /></MetricState>
              </MetricRow>
              <Percent>Percent</Percent>
              <CpuChart />
              <SeriesLegend>
                <Swatch $c="#1f77b4" />
                CPUUtilization
              </SeriesLegend>
              <TimelineHint>Click timeline to see the state change at the selected time.</TimelineHint>
              <Timeline />
              <StateLegend>
                <StateItem><Swatch $c="#d62728" />In alarm</StateItem>
                <StateItem><Swatch $c="#98df8a" />OK</StateItem>
                <StateItem><Swatch $c="#c7c7c7" />Insufficient data</StateItem>
                <StateItem><Swatch $c="#1f77b4" />Disabled actions</StateItem>
              </StateLegend>
            </GraphPanel>
            <TabsRow>
              <DetailTab $on $w={73}>Details</DetailTab>
              <TabDivider />
              <DetailTab $w={62}>Tags</DetailTab>
              <DetailTab $w={79}>Actions</DetailTab>
              <DetailTab $w={78.5}>History</DetailTab>
              <DetailTab $w={120} $last>Parent alarms</DetailTab>
            </TabsRow>
          </DetailContent>
          <ScrollTrack $top={0}>
            <ScrollArrow><Caret $dir="up" $size={3} /></ScrollArrow>
            <ScrollThumb $h={270} />
            <ScrollFill />
            <ScrollArrow><Caret $size={3} $color="#505050" /></ScrollArrow>
          </ScrollTrack>
        </DetailRow>
      </DetailPane>
    </Body>

    <Footer>
      <FooterShell>
        <ShellIcon size={13} />
        CloudShell
      </FooterShell>
      Feedback
      <FooterRight>
        <FooterCopy>© 2025, Amazon Web Services, Inc. or its affiliates.</FooterCopy>
        <span>Privacy</span>
        <span>Terms</span>
        <span>Cookie preferences</span>
      </FooterRight>
    </Footer>

    <CheckMark width="1366" height="768" viewBox="0 0 1366 768" fill="none">
      <path
        d="M663 167 C685 178 705 188 720 202 C735 178 752 163 770 150 C810 120 855 97 901 77 C950 52 1005 27 1058 4"
        stroke="#22dd00"
        strokeWidth="3"
        strokeLinecap="round"
        strokeLinejoin="round"
      />
    </CheckMark>
  </Page>
);

export default App;
